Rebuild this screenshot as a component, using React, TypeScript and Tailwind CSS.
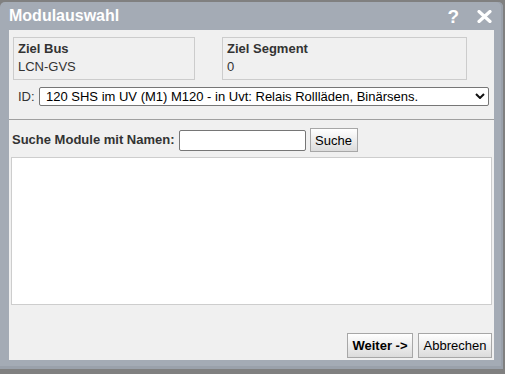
import React from 'react';

// Dialog "Modulauswahl" – module selection for a target bus / segment
const ModulauswahlDialog: React.FC = () => {
  return (
    <div className="w-[505px] h-[374px] bg-[#808080] pt-[2px] overflow-hidden font-['Liberation_Sans',Arial,sans-serif]">
      <div className="w-[503px] h-[367px] bg-[#a4abb5] rounded-t-[5px] px-[9px] flex flex-col shadow-[inset_0_-3px_0_#9aa1ab,inset_-2px_0_0_#9aa1ab]">
        {/* Title bar */}
        <div className="h-[28px] flex items-center text-white">
          <span className="text-[16px] leading-[18px] font-bold">Modulauswahl</span>
          <div className="ml-auto flex items-center mr-[2px]">
            <span className="text-[19px] leading-none font-bold mr-[18px]">?</span>
            <svg width="15" height="13" viewBox="0 0 15 13" className="block">
              <path d="M2 1.5 L13 11.5 M13 1.5 L2 11.5" stroke="#fff" strokeWidth="3.2" strokeLinecap="round" />
            </svg>
          </div>
        </div>

        {/* Content */}
        <div className="h-[330px] bg-[#f0f0f0] flex flex-col text-[13px] leading-[18px] text-[#333]">
          <div className="flex pt-[7px] pl-[4px]">
            <div className="w-[182px] h-[43px] border border-[#cccccc] px-[4px] pt-[2px]">
              <div className="font-bold">Ziel Bus</div>
              <div>LCN-GVS</div>
            </div>
            <div className="w-[245px] h-[43px] ml-[27px] border border-[#cccccc] px-[4px] pt-[2px]">
              <div className="font-bold">Ziel Segment</div>
              <div>0</div>
            </div>
          </div>

          <div className="flex items-center mt-[7px] pl-[9px]">
            <span className="w-[20px]">ID:</span>
            <div className="relative w-[450px] h-[19px] ml-[1px]">
              <select
                defaultValue="120"
                className="appearance-none w-full h-full bg-white border border-[#767676] rounded-[2px] pl-[6px] text-[13px] leading-[17px] text-black outline-none"
              >
                <option value="120">120 SHS im UV (M1) M120 - in Uvt: Relais Rollläden, Binärsens.</option>
              </select>
              <svg width="10" height="6" viewBox="0 0 10 6" className="absolute right-[4px] top-[6px] pointer-events-none">
                <path d="M1 1 L5 5 L9 1" fill="none" stroke="#111" strokeWidth="2" />
              </svg>
            </div>
          </div>

          <div className="mt-[13px] border-t border-[#a0a0a0]" />

          <div className="flex items-center mt-[8px] pl-[3px] h-[24px]">
            <span className="font-bold">Suche Module mit Namen:</span>
            <input className="ml-[4px] w-[127px] h-[21px] bg-white border border-[#767676] rounded-[2px] outline-none px-[2px] text-[13px]" />
            <button className="ml-[4px] w-[48px] h-[24px] border border-[#a7a7a7] bg-gradient-to-b from-[#ffffff] to-[#dcdcdc] text-black text-[13px] leading-none">
              Suche
            </button>
          </div>

          <div className="mt-[5px] ml-[2px] w-[481px] h-[148px] bg-white border border-[#cdcdcd]" />

          <div className="mt-auto flex justify-end gap-[5px] pr-[2px] pb-[2px]">
            <button className="w-[66px] h-[25px] border border-[#a7a7a7] bg-gradient-to-b from-[#ffffff] to-[#dcdcdc] text-black font-bold text-[13px] leading-none">
              Weiter -&gt;
            </button>
            <button className="w-[74px] h-[25px] border border-[#a7a7a7] bg-gradient-to-b from-[#ffffff] to-[#dcdcdc] text-black text-[13px] leading-none">
              Abbrechen
            </button>
          </div>
        </div>
      </div>
    </div>
  );
};

export default function App() {
  return <ModulauswahlDialog />;
}
